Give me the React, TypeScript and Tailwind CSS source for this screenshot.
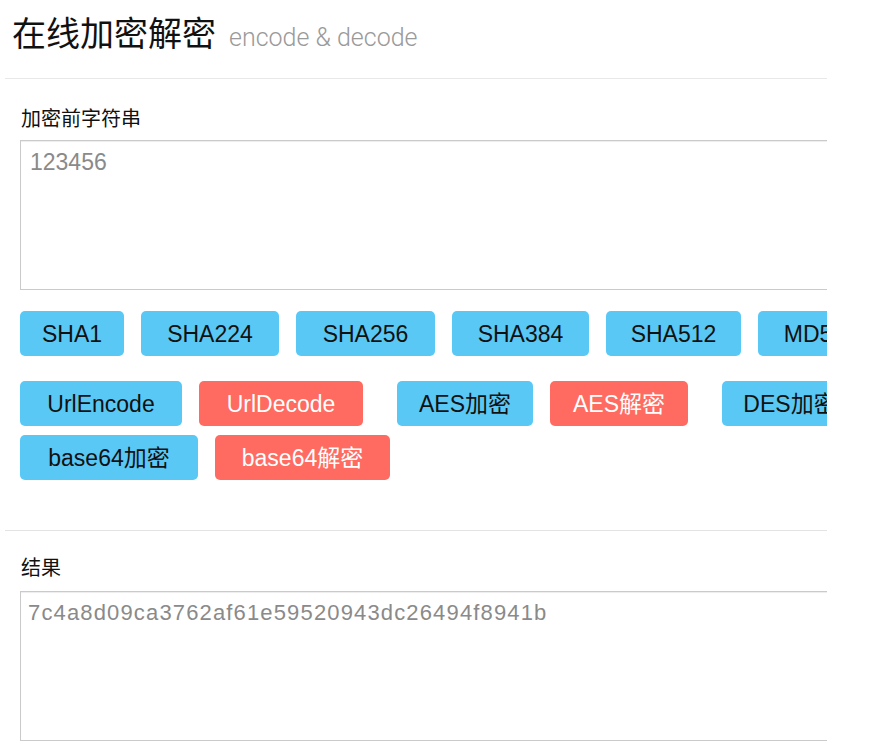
import React from "react";

const FONT = "font-['Liberation_Sans','Noto_Sans_CJK_SC',sans-serif]";

type Btn = { label: string; w: number; red?: boolean };

function Button({ label, w, red }: Btn) {
  return (
    <div
      className={`h-[45px] shrink-0 rounded-[5px] flex items-center justify-center text-[23px] leading-[26px] ${
        red ? "bg-[#ff6b60] text-white" : "bg-[#5ac8f5] text-[#111]"
      }`}
      style={{ width: w }}
    >
      {label}
    </div>
  );
}

export default function App() {
  const row1: Btn[] = [
    { label: "SHA1", w: 104 },
    { label: "SHA224", w: 138 },
    { label: "SHA256", w: 139 },
    { label: "SHA384", w: 137 },
    { label: "SHA512", w: 135 },
    { label: "MD5", w: 100 },
  ];
  const pairs: Btn[][] = [
    [
      { label: "UrlEncode", w: 162 },
      { label: "UrlDecode", w: 164, red: true },
    ],
    [
      { label: "AES加密", w: 136 },
      { label: "AES解密", w: 138, red: true },
    ],
    [
      { label: "DES加密", w: 136 },
      { label: "DES解密", w: 138, red: true },
    ],
  ];
  const row3: Btn[] = [
    { label: "base64加密", w: 178 },
    { label: "base64解密", w: 175, red: true },
  ];

  return (
    <div className={`w-[877px] h-[752px] bg-white overflow-hidden ${FONT}`}>
      <div className="w-[827px] overflow-hidden">
        {/* Header */}
        <div className="pt-[14px] pl-[12px] flex items-baseline">
          <span className="text-[34px] leading-[40px] text-[#111]">在线加密解密</span>
          <span className="ml-[13px] text-[25px] leading-[40px] text-[#9a9a9a] font-['Roboto',sans-serif] font-light">
            encode &amp; decode
          </span>
        </div>
        <div className="ml-[5px] mt-[20px] h-px bg-[#e8e8e8]" />

        {/* Input section */}
        <div className="pl-[20px]">
          <div className="mt-[28px] pl-px text-[20px] leading-[24px] text-[#111]">加密前字符串</div>
          <textarea
            readOnly
            defaultValue="123456"
            className={`mt-[9px] block w-[880px] h-[150px] resize-none border border-[#cacaca] shadow-[inset_0_1px_1px_rgba(0,0,0,0.075)] pl-[9px] pt-[7px] text-[23px] leading-[28px] text-[#8a8a8a] outline-none ${FONT}`}
          />

          {/* Buttons */}
          <div className="mt-[21px] flex gap-[17px] flex-nowrap">
            {row1.map((b) => (
              <Button key={b.label} {...b} />
            ))}
          </div>
          <div className="mt-[25px] flex gap-[34px] flex-nowrap">
            {pairs.map((p, i) => (
              <div key={i} className="flex gap-[17px] shrink-0">
                {p.map((b) => (
                  <Button key={b.label} {...b} />
                ))}
              </div>
            ))}
          </div>
          <div className="mt-[9px] flex gap-[17px]">
            {row3.map((b) => (
              <Button key={b.label} {...b} />
            ))}
          </div>
        </div>

        <div className="ml-[5px] mt-[50px] h-px bg-[#e3e3e3]" />

        {/* Result section */}
        <div className="pl-[20px]">
          <div className="mt-[25px] pl-px text-[20px] leading-[24px] text-[#111]">结果</div>
          <textarea
            readOnly
            defaultValue="7c4a8d09ca3762af61e59520943dc26494f8941b"
            className={`mt-[11px] block w-[880px] h-[150px] resize-none border border-[#cacaca] shadow-[inset_0_1px_1px_rgba(0,0,0,0.075)] pl-[7px] pt-[8px] text-[22px] leading-[26px] tracking-[1.15px] text-[#8a8a8a] outline-none ${FONT}`}
          />
        </div>
      </div>
    </div>
  );
}
